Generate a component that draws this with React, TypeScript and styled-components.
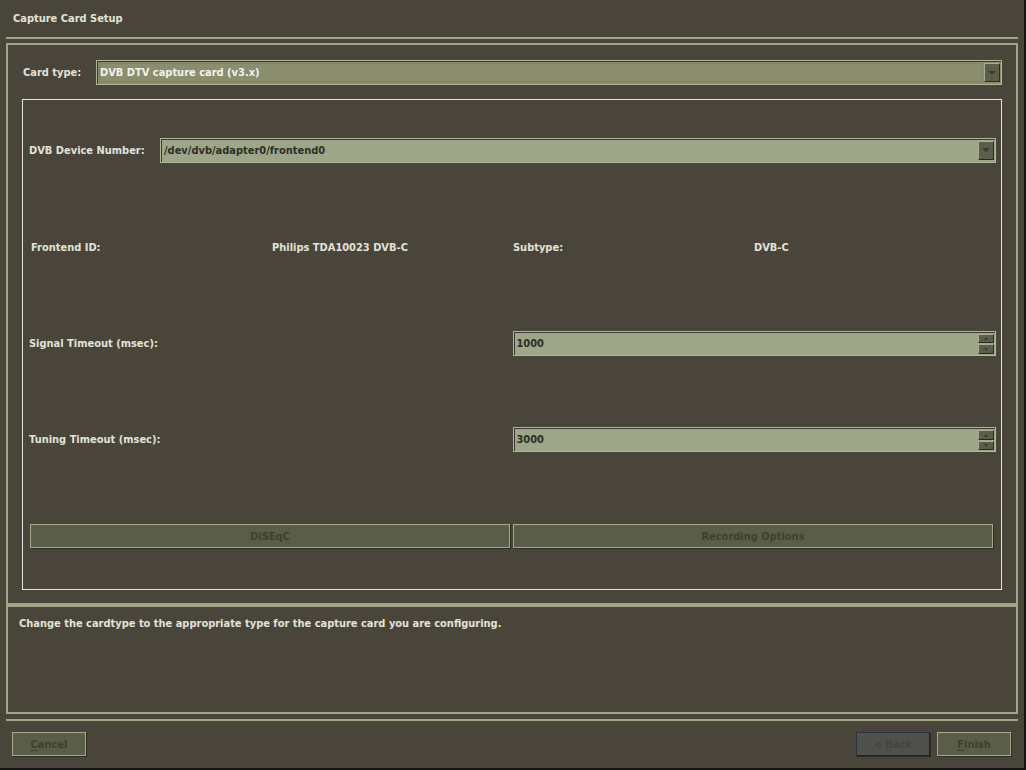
import React from "react";
import styled, { createGlobalStyle } from "styled-components";

const C = {
  bg: "#49453a",
  line: "#a2a688",
  text: "#e2e2d8",
  dim: "#3f3e31",
  btn: "#5a5e48",
  field: "#9ea68a",
  fieldFocus: "#8a8e6e",
  dark: "#2c2b22",
};

const Global = createGlobalStyle`
  html, body { margin: 0; padding: 0; background: #161616; }
  body { width: 1026px; height: 770px; overflow: hidden; font-family: "DejaVu Sans", "Liberation Sans", sans-serif; font-weight: bold; font-size: 9.9px; }
  * { box-sizing: border-box; }
`;

const Window = styled.div`
  width: 1024px;
  height: 768px;
  background: ${C.bg};
  display: flex;
  flex-direction: column;
  padding: 0 6px;
  color: ${C.text};
`;

const Title = styled.div`
  height: 37px;
  display: flex;
  align-items: center;
  padding-left: 7px;
  padding-bottom: 1px;
`;

const Rule = styled.div<{ $mt?: number }>`
  height: 2px;
  background: ${C.line};
  margin-top: ${(p) => p.$mt ?? 0}px;
`;

const Frame = styled.div<{ $h: number; $mt?: number }>`
  height: ${(p) => p.$h}px;
  margin-top: ${(p) => p.$mt ?? 0}px;
  border: 2px solid ${C.line};
  display: flex;
  flex-direction: column;
`;

const MainInner = styled.div`
  flex: 1;
  display: flex;
  flex-direction: column;
  padding: 15px 14px 13px 14px;
`;

const CardRow = styled.div`
  height: 25px;
  display: grid;
  grid-template-columns: 74px 1fr;
  align-items: center;
`;

const Label = styled.span<{ $pl?: number }>`
  padding-left: ${(p) => p.$pl ?? 0}px;
  white-space: nowrap;
  color: ${C.text};
`;

const Combo = styled.div<{ $focus?: boolean }>`
  height: 25px;
  border: 1px solid #b2b698;
  background: ${(p) => (p.$focus ? C.fieldFocus : C.field)};
  box-shadow: inset 1px 1px 0 #3a3a2e;
  display: flex;
  align-items: stretch;
  padding: 1px;
`;

const ComboText = styled.div<{ $focus?: boolean }>`
  flex: 1;
  display: flex;
  align-items: center;
  padding-left: 1px;
  margin: 1px 2px 1px 1px;
  color: ${(p) => (p.$focus ? "#f2f2ea" : "#2e2e26")};
  outline: ${(p) => (p.$focus ? "1px dotted #6e7a80" : "none")};
  outline-offset: -1px;
`;

const DropBtn = styled.div`
  width: 16px;
  margin: 1px 0;
  background: #5c5e4a;
  border-top: 1px solid #a8ac90;
  border-left: 1px solid #a8ac90;
  border-right: 1px solid #2a2a22;
  border-bottom: 1px solid #2a2a22;
  display: flex;
  align-items: center;
  justify-content: center;
`;

const Arrow = styled.div<{ $up?: boolean; $w: number }>`
  width: 0;
  height: 0;
  border-left: ${(p) => p.$w / 2}px solid transparent;
  border-right: ${(p) => p.$w / 2}px solid transparent;
  ${(p) =>
    p.$up
      ? `border-bottom: ${Math.ceil(p.$w / 2)}px solid #3a3a2e;`
      : `border-top: ${Math.ceil(p.$w / 2)}px solid #3a3a2e;`}
`;

const Group = styled.div`
  flex: 1;
  margin-top: 14px;
  border: 1px solid #e6e6dc;
  display: grid;
  grid-template-rows: repeat(5, 96.5px);
  padding: 2px 5px 0 6px;
`;

const Row = styled.div<{ $cols: string; $pad?: string; $gap?: number }>`
  display: grid;
  grid-template-columns: ${(p) => p.$cols};
  align-items: center;
  padding: ${(p) => p.$pad ?? "0"};
  column-gap: ${(p) => p.$gap ?? 0}px;
`;

const SpinBox = styled.div`
  height: 25px;
  border: 1px solid #b2b698;
  background: ${C.field};
  box-shadow: inset 1px 1px 0 #3a3a2e;
  display: flex;
  padding: 1px;
`;

const SpinText = styled.div`
  flex: 1;
  display: flex;
  align-items: center;
  padding-left: 2px;
  color: #2e2e26;
`;

const SpinCol = styled.div`
  width: 16px;
  display: flex;
  flex-direction: column;
  gap: 1px;
  padding: 1px 0 0;
`;

const SpinBtn = styled.div`
  flex: 1;
  background: #5c5e4a;
  border-top: 1px solid #a8ac90;
  border-left: 1px solid #a8ac90;
  border-right: 1px solid #2a2a22;
  border-bottom: 1px solid #2a2a22;
  display: flex;
  align-items: center;
  justify-content: center;
`;

const Button = styled.div<{ $w?: number; $back?: boolean }>`
  height: 24px;
  ${(p) => (p.$w ? `width: ${p.$w}px;` : "")}
  background: ${(p) => (p.$back ? "#50504c" : C.btn)};
  border: 1px solid ${(p) => (p.$back ? "#2a3142" : "#a6aa8c")};
  ${(p) => (p.$back ? "border-bottom-color: #1a2232; border-right-color: #1a2232;" : "")}
  box-shadow: 1px 1px 0 ${C.dark};
  color: ${(p) => (p.$back ? "#44443f" : C.dim)};
  display: flex;
  align-items: center;
  justify-content: center;
  padding-top: 1px;
  & u { text-underline-offset: 2px; }
`;

const HelpText = styled.div`
  padding: 11px 0 0 11px;
`;

const Footer = styled.div`
  margin-top: 11px;
  display: flex;
  align-items: center;
  padding: 0 7px 0 6px;
`;

const Spacer = styled.div`
  flex: 1;
`;

const Pair = styled.div`
  display: flex;
  gap: 7px;
`;

function Spin({ value }: { value: string }) {
  return (
    <SpinBox>
      <SpinText>{value}</SpinText>
      <SpinCol>
        <SpinBtn>
          <Arrow $up $w={5} />
        </SpinBtn>
        <SpinBtn>
          <Arrow $w={5} />
        </SpinBtn>
      </SpinCol>
    </SpinBox>
  );
}

export default function App() {
  return (
    <>
      <Global />
      <Window>
        <Title>Capture Card Setup</Title>
        <Rule />
        <Frame $h={562} $mt={4}>
          <MainInner>
            <CardRow>
              <Label $pl={1}>Card type:</Label>
              <Combo $focus>
                <ComboText $focus>DVB DTV capture card (v3.x)</ComboText>
                <DropBtn>
                  <Arrow $w={8} />
                </DropBtn>
              </Combo>
            </CardRow>
            <Group>
              <Row $cols="131px 1fr">
                <Label>DVB Device Number:</Label>
                <Combo>
                  <ComboText>/dev/dvb/adapter0/frontend0</ComboText>
                  <DropBtn>
                    <Arrow $w={8} />
                  </DropBtn>
                </Combo>
              </Row>
              <Row $cols="1fr 1fr 1fr 1fr" $pad="2px 1px 0 2px">
                <Label>Frontend ID:</Label>
                <Label>Philips TDA10023 DVB-C</Label>
                <Label>Subtype:</Label>
                <Label>DVB-C</Label>
              </Row>
              <Row $cols="1fr 1fr">
                <Label>Signal Timeout (msec):</Label>
                <Spin value="1000" />
              </Row>
              <Row $cols="1fr 1fr">
                <Label>Tuning Timeout (msec):</Label>
                <Spin value="3000" />
              </Row>
              <Row $cols="1fr 1fr" $pad="0 3px 0 1px" $gap={3}>
                <Button>DiSEqC</Button>
                <Button>Recording Options</Button>
              </Row>
            </Group>
          </MainInner>
        </Frame>
        <Frame $h={109}>
          <HelpText>Change the cardtype to the appropriate type for the capture card you are configuring.</HelpText>
        </Frame>
        <Rule $mt={5} />
        <Footer>
          <Button $w={74}>
            <span>
              <u>C</u>ancel
            </span>
          </Button>
          <Spacer />
          <Pair>
            <Button $w={74} $back>
              <span>
                &lt; <u>B</u>ack
              </span>
            </Button>
            <Button $w={74}>
              <span>
                <u>F</u>inish
              </span>
            </Button>
          </Pair>
        </Footer>
      </Window>
    </>
  );
}
